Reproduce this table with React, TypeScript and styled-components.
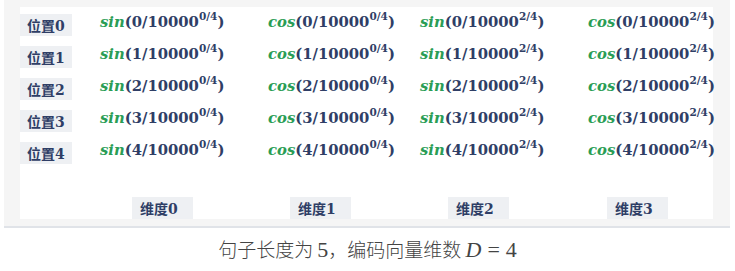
import { Fragment } from 'react'
import styled, { createGlobalStyle } from 'styled-components'

const GlobalStyle = createGlobalStyle`
  html, body {
    margin: 0;
    padding: 0;
    background: #ffffff;
  }
`

const Page = styled.div`
  width: 735px;
  height: 271px;
  overflow: hidden;
  background: #ffffff;
`

const Figure = styled.div`
  margin-left: 4px;
  width: 726px;
  height: 228px;
  padding: 7px 0 0 16px;
  box-sizing: border-box;
  background: #f5f5f5;
  border-bottom: 2px solid #e0e3e8;
`

const Panel = styled.div`
  width: 693px;
  height: 212px;
  background: #ffffff;
  display: grid;
  grid-template-columns: 80px 168px 152px 168px 1fr;
  grid-template-rows: repeat(5, 32px) 1fr;
  align-items: start;
`

const Tag = styled.div<{ $shift?: number }>`
  justify-self: start;
  margin-top: 7px;
  margin-left: ${({ $shift }) => $shift ?? 0}px;
  height: 22px;
  padding: 0 7px;
  display: flex;
  align-items: center;
  background: #eef0f3;
  color: #2f3e66;
  font-family: 'DejaVu Serif', 'Noto Sans CJK SC', serif;
  font-weight: 700;
  font-size: 14px;
`

const DimTag = styled(Tag)`
  align-self: end;
  margin-top: 0;
  width: 61px;
  box-sizing: border-box;
  padding: 0 8px;
`

const Formula = styled.div`
  justify-self: start;
  margin-top: 4px;
  white-space: nowrap;
  color: #2f3e66;
  font-family: 'DejaVu Serif', serif;
  font-weight: 700;
  font-size: 14.8px;
  line-height: 22px;
`

const Fn = styled.span`
  color: #2a9d55;
  font-style: italic;
`

const Sup = styled.sup`
  font-size: 10.5px;
  vertical-align: 7px;
  line-height: 0;
`

const Caption = styled.div`
  margin-top: 8px;
  text-align: center;
  color: #444444;
  font-family: 'Noto Sans CJK SC', sans-serif;
  font-weight: 300;
  font-size: 19px;
  line-height: 26px;
`

const MathText = styled.span`
  font-family: 'Liberation Serif', serif;
  font-size: 22px;
`

const Italic = styled.span`
  font-style: italic;
`

const Rel = styled.span`
  margin: 0 6px;
`

const rows = [0, 1, 2, 3, 4]
const cols = [
  { fn: 'sin', exp: '0/4' },
  { fn: 'cos', exp: '0/4' },
  { fn: 'sin', exp: '2/4' },
  { fn: 'cos', exp: '2/4' },
]
const dimShift = [32, 22, 28, 19]

const App = () => (
  <Page>
    <GlobalStyle />
    <Figure>
      <Panel>
        {rows.map((r) => (
          <Fragment key={r}>
            <Tag>位置{r}</Tag>
            {cols.map((c, i) => (
              <Formula key={i}>
                <Fn>{c.fn}</Fn>({r}/10000<Sup>{c.exp}</Sup>)
              </Formula>
            ))}
          </Fragment>
        ))}
        <div />
        {dimShift.map((s, i) => (
          <DimTag key={i} $shift={s}>
            维度{i}
          </DimTag>
        ))}
      </Panel>
    </Figure>
    <Caption>
      句子长度为 <MathText>5</MathText>，编码向量维数{' '}
      <MathText>
        <Italic>D</Italic>
        <Rel>=</Rel>4
      </MathText>
    </Caption>
  </Page>
)

export default App
